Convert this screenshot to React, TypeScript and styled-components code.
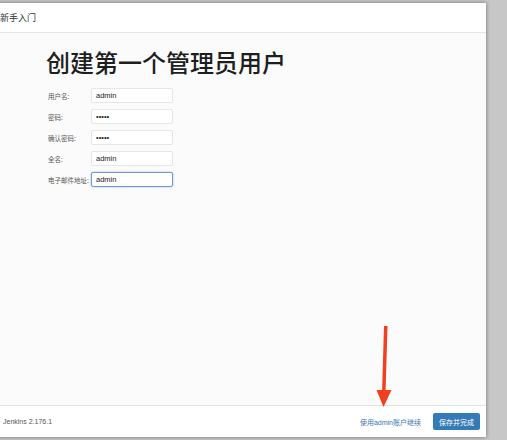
import React from 'react';
import styled, { createGlobalStyle } from 'styled-components';

const GlobalStyle = createGlobalStyle`
    html, body {
        margin: 0;
        padding: 0;
        background: #c7c7c7;
        overflow: hidden;
    }
`;

const Page = styled.div`
    position: relative;
    width: 507px;
    height: 440px;
    padding-top: 3px;
    box-sizing: border-box;
    font-family: "Liberation Sans", "Noto Sans CJK SC", Arial, sans-serif;
    color: #333;
`;

const Modal = styled.div`
    margin-left: -15px;
    width: 501px;
    height: 434px;
    background: #fff;
    box-shadow: 0 0 4px rgba(0, 0, 0, 0.45);
    display: flex;
    flex-direction: column;
`;

const Header = styled.div`
    height: 29px;
    padding: 0 15px;
    display: flex;
    align-items: center;
    border-bottom: 1px solid #e5e5e5;
    font-family: "Noto Sans CJK SC", sans-serif;
    font-size: 9px;
    color: #333;
`;

const Body = styled.div`
    flex: 1;
    background: #fbfbfb;
    padding: 14px 0 0 61px;
`;

const Title = styled.h1`
    margin: 0 0 11px;
    font-family: "Noto Sans CJK SC", sans-serif;
    font-weight: 500;
    font-size: 24px;
    line-height: 30px;
    color: #1e1e1e;
`;

const Form = styled.div`
    display: grid;
    grid-template-columns: 43px 82px;
    row-gap: 6px;
    margin-left: 2px;
`;

const Label = styled.label`
    font-family: "Noto Sans CJK SC", sans-serif;
    font-size: 6.5px;
    color: #555;
    display: flex;
    align-items: center;
    white-space: nowrap;
`;

const Input = styled.input<{ $focused?: boolean }>`
    box-sizing: border-box;
    width: 82px;
    height: 15px;
    margin: 0;
    padding: 0 4px;
    font-family: "Liberation Sans", Arial, sans-serif;
    font-size: 7.5px;
    color: #222;
    background: #fff;
    border: 1px solid ${(p) => (p.$focused ? '#6f9ad6' : '#e6e6e6')};
    border-radius: 2px;
    outline: none;
    box-shadow: ${(p) => (p.$focused ? '0 0 2px rgba(80, 130, 210, 0.6)' : 'none')};
`;

const Footer = styled.div`
    height: 31px;
    border-top: 1px solid #e2e2e2;
    padding: 0 6px 0 18px;
    display: flex;
    align-items: center;
    justify-content: space-between;
`;

const Version = styled.span`
    font-size: 7px;
    color: #555;
`;

const Actions = styled.div`
    display: flex;
    align-items: center;
    gap: 12px;
`;

const Link = styled.a`
    font-family: "Liberation Sans", "Noto Sans CJK SC", sans-serif;
    font-size: 7px;
    color: #3d77b3;
    text-decoration: none;
`;

const Button = styled.button`
    height: 17px;
    padding: 0 6px;
    border: none;
    border-radius: 2px;
    background: #337ab7;
    color: #fff;
    font-family: "Noto Sans CJK SC", sans-serif;
    font-size: 7px;
`;

const Arrow = styled.svg`
    position: absolute;
    left: 374px;
    top: 324px;
`;

const fields = [
    { label: '用户名:', type: 'text', value: 'admin' },
    { label: '密码:', type: 'password', value: 'admin' },
    { label: '确认密码:', type: 'password', value: 'admin' },
    { label: '全名:', type: 'text', value: 'admin' },
    { label: '电子邮件地址:', type: 'text', value: 'admin', focused: true },
];

export default function App() {
    return (
        <Page>
            <GlobalStyle />
            <Modal>
                <Header>新手入门</Header>
                <Body>
                    <Title>创建第一个管理员用户</Title>
                    <Form>
                        {fields.map((f) => (
                            <React.Fragment key={f.label}>
                                <Label>{f.label}</Label>
                                <Input type={f.type} value={f.value} readOnly $focused={f.focused} />
                            </React.Fragment>
                        ))}
                    </Form>
                </Body>
                <Footer>
                    <Version>Jenkins 2.176.1</Version>
                    <Actions>
                        <Link href="#">使用admin账户继续</Link>
                        <Button>保存并完成</Button>
                    </Actions>
                </Footer>
            </Modal>
            <Arrow width="22" height="86" viewBox="0 0 22 86">
                <path d="M10 2 L13.5 2 L11.5 70 L8 70 Z" fill="#f2401f" />
                <path d="M2.5 66 L17.5 66 L9.5 83 Z" fill="#f2401f" />
            </Arrow>
        </Page>
    );
}
